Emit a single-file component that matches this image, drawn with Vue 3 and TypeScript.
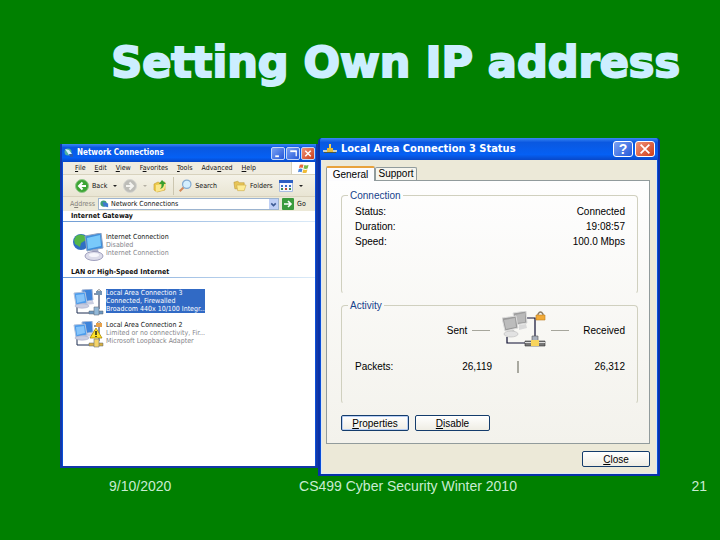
<script setup lang="ts">
import { ref } from 'vue'

interface MenuEntry { key: string; before: string; rest: string }
interface Connection { id: number; name: string; status: string; device: string; selected: boolean; warning: boolean }

const menus: MenuEntry[] = [
  { before: '', key: 'F', rest: 'ile' },
  { before: '', key: 'E', rest: 'dit' },
  { before: '', key: 'V', rest: 'iew' },
  { before: 'F', key: 'a', rest: 'vorites' },
  { before: '', key: 'T', rest: 'ools' },
  { before: 'Adva', key: 'n', rest: 'ced' },
  { before: '', key: 'H', rest: 'elp' },
]

const lan: Connection[] = [
  { id: 3, name: 'Local Area Connection 3', status: 'Connected, Firewalled', device: 'Broadcom 440x 10/100 Integr...', selected: true, warning: false },
  { id: 2, name: 'Local Area Connection 2', status: 'Limited or no connectivity, Fir...', device: 'Microsoft Loopback Adapter', selected: false, warning: true },
]

const details = [
  { label: 'Status:', value: 'Connected' },
  { label: 'Duration:', value: '19:08:57' },
  { label: 'Speed:', value: '100.0 Mbps' },
]

const address = ref('Network Connections')
</script>

<template>
  <main class="slide">
    <h1 class="headline">Setting Own IP address</h1>

    <div class="desktop">
      <section class="window explorer" aria-label="Network Connections">
        <header class="bar bar-small">
          <svg class="ico-title" viewBox="0 0 10 10">
            <circle cx="4" cy="4" r="3.5" fill="#4fb0a0" />
            <path d="M1 1l4 1 3 4 1 3-4-2z" fill="#d6f0ff" />
            <path d="M5 6l4 0 0 3-3 0z" fill="#2a5db0" />
          </svg>
          <span class="bar-text">Network Connections</span>
          <button class="cap blue" aria-label="Minimize"><svg viewBox="0 0 12 12"><path d="M3 9h4" stroke="#fff" stroke-width="2" /></svg></button>
          <button class="cap blue" aria-label="Maximize"><svg viewBox="0 0 12 12"><path d="M9.500 9V3" fill="none" stroke="#fff" stroke-width="1.400" /><path d="M3 3.500h7" stroke="#fff" stroke-width="2" /></svg></button>
          <button class="cap red" aria-label="Close"><svg viewBox="0 0 12 12"><path d="M3 3l6 6M9 3l-6 6" stroke="#fff" stroke-width="1.600" /></svg></button>
        </header>

        <div class="explorer-body">
          <nav class="menus">
            <button v-for="m in menus" :key="m.key" class="flat">{{ m.before }}<u>{{ m.key }}</u>{{ m.rest }}</button>
            <span class="flag">
              <svg viewBox="0 0 14 12">
                <path d="M3 2q2-1 4 0L6 5.500q-2-1-4 0z" fill="#e8683c" />
                <path d="M8 2.300q2 1 4.500 0L11.500 6q-2 1-4.500 0z" fill="#7cb84a" />
                <path d="M1.800 6.500q2-1 4 0L5 10q-2-1-4 0z" fill="#4a86dc" />
                <path d="M6.800 7q2 1 4.500 0L10.300 10.500q-2 1-4.500 0z" fill="#f0bc38" />
              </svg>
            </span>
          </nav>

          <div class="tools">
            <button class="flat tool">
              <svg class="ico" viewBox="0 0 14 14"><circle cx="7" cy="7" r="6.500" fill="#3da535" stroke="#93c98a" /><path d="M7.500 3.500L4 7l3.500 3.500M4 7h7" fill="none" stroke="#fff" stroke-width="2" /></svg>
              Back
            </button>
            <i class="caret"></i>
            <button class="flat tool" aria-label="Forward">
              <svg class="ico" viewBox="0 0 14 14"><circle cx="7" cy="7" r="6.500" fill="#bdbdb8" stroke="#d6d6d0" /><path d="M6.500 3.500L10 7l-3.500 3.500M10 7H3" fill="none" stroke="#f4f4f0" stroke-width="2" /></svg>
            </button>
            <i class="caret pale"></i>
            <button class="flat tool" aria-label="Up">
              <svg class="ico" viewBox="0 0 14 14"><path d="M1 5l4-2 2 1 5-1v8l-8 2-3-2z" fill="#ecc94c" stroke="#c69a2c" stroke-width=".6" /><path d="M3 6l10-1-2 6-8 2z" fill="#fbe78c" /><path d="M9 1l4 4H11q0 4-4 5 2-2 1.500-5H6z" fill="#38a030" /></svg>
            </button>
            <i class="rule"></i>
            <button class="flat tool search">
              <svg class="ico" viewBox="0 0 16 16"><path d="M7 9l-5 5" stroke="#d58a5c" stroke-width="2.400" /><circle cx="10" cy="6" r="4.800" fill="#d4efff" stroke="#86acd2" stroke-width="1.400" /></svg>
              Search
            </button>
            <button class="flat tool folders">
              <svg class="ico" viewBox="0 0 15 14"><path d="M1 3l4-1 2 1.500h5V10H2z" fill="#e8c558" stroke="#b99533" stroke-width=".6" /><path d="M4 6h10l-2 6H5z" fill="#fdec94" stroke="#c9a540" stroke-width=".6" /></svg>
              Folders
            </button>
            <button class="flat tool views" aria-label="Views">
              <svg class="ico" viewBox="0 0 14 12"><path d="M.5.5h13v11H.5z" fill="#f4f8ff" stroke="#a8bce0" /><path d="M0 0h14v3H0z" fill="#2b5fc4" /><path d="M2 5h2v2H2zM6 5h2v2H6zM10 5h2v2h-2z" fill="#3c70c8" /><path d="M2 8h2v2H2zM10 8h2v2h-2z" fill="#3a8a50" /><path d="M6 8h2v2H6z" fill="#c04a3a" /></svg>
            </button>
            <i class="caret"></i>
          </div>

          <form class="address" @submit.prevent>
            <label for="address">A<u>d</u>dress</label>
            <span class="field">
              <svg viewBox="0 0 10 10"><circle cx="4" cy="4" r="3.500" fill="#3f9f78" /><path d="M3 2l6 2v4l-5-1z" fill="#3e78d0" /></svg>
              <input id="address" v-model="address" type="text" />
              <button type="button" class="drop" aria-label="Show addresses"><svg viewBox="0 0 8 8"><path d="M2 3l2 2 2-2" fill="none" stroke="#3c5a94" stroke-width="1.400" /></svg></button>
            </span>
            <button class="flat go">
              <svg viewBox="0 0 12 12"><rect width="12" height="12" rx="1" fill="#3a9a3c" /><path d="M2 6h7M6 3l3 3-3 3" fill="none" stroke="#fff" stroke-width="1.600" /></svg>
              Go
            </button>
          </form>

          <div class="listing">
            <h2 class="group">Internet Gateway</h2>
            <article class="conn">
              <svg class="pic" viewBox="0 0 32 28">
                <circle cx="8" cy="9" r="8" fill="#2f6fc4" />
                <path d="M3 3q5-3 9 0l1 4-5 3-1 4-5-3-1-4z" fill="#55b648" />
                <path d="M12 3l16-3 2 15-16 3z" fill="#3f8fdc" stroke="#8fa2c0" />
                <path d="M14 5l13-3 1 11-13 3z" fill="#79c9fa" />
                <path d="M19 17l6-1 1 5h-6z" fill="#a8aec8" />
                <ellipse cx="21" cy="23" rx="9" ry="4.500" fill="#dcdcea" stroke="#8c8cae" stroke-width=".8" />
                <ellipse cx="21" cy="22" rx="5" ry="2" fill="#f6f6fc" />
              </svg>
              <div class="info"><span>Internet Connection</span><span>Disabled</span><span>Internet Connection</span></div>
            </article>

            <h2 class="group lan">LAN or High-Speed Internet</h2>
            <article v-for="c in lan" :key="c.id" class="conn" :class="{ selected: c.selected }">
              <svg class="pic" viewBox="0 0 32 28">
                <path d="M21 5h5v15M4 18v6h12" fill="none" stroke="#1c2c50" stroke-width="1" />
                <path d="M9 1l10-1 1 11-10 2z" fill="#3d83da" stroke="#a6b8d8" />
                <path d="M11 13l9-1 1 3-9 1z" fill="#c9cde0" />
                <path d="M1 4l11-1 2 11-11 2z" fill="#4c9cec" stroke="#b2c2dc" />
                <path d="M3 6l8-1 1 7-8 2z" fill="#86c4fa" />
                <ellipse cx="9" cy="17" rx="7" ry="2.200" fill="#c9cde0" stroke="#9a9fc0" stroke-width=".5" />
                <path d="M24 3V2q2-3 4 0v1" fill="none" stroke="#888" stroke-width="1" />
                <path d="M23 2h6v4h-6z" :fill="c.warning ? '#e8a24a' : '#7795b4'" />
                <path d="M16 22h14v3H16z" :fill="c.warning ? '#d8b040' : '#6d98c0'" stroke="#5a6470" stroke-width=".5" />
                <path d="M21 18h5v8h-5z" :fill="c.warning ? '#f5d468' : '#92b8d8'" stroke="#6a7480" stroke-width=".6" />
                <g v-if="c.warning"><path d="M23 7l6 10H17z" fill="#ffe22a" stroke="#a88600" stroke-width=".8" /><path d="M23 10v4M23 15v1" stroke="#111" stroke-width="1.400" /></g>
              </svg>
              <div class="info"><span>{{ c.name }}</span><span>{{ c.status }}</span><span>{{ c.device }}</span></div>
            </article>
          </div>
        </div>
      </section>

      <section class="window status" aria-label="Local Area Connection 3 Status">
        <header class="bar">
          <svg class="ico-net" viewBox="0 0 14 12"><path d="M0 7h14v2H0z" fill="#c9d0c8" /><path d="M6 1h2v5H6z" fill="#f2d257" /><path d="M4 5h6v5H4z" fill="#e8bd3a" /><path d="M1 9h12v1H1z" fill="#4a5a4a" /></svg>
          <span class="bar-text">Local Area Connection 3 Status</span>
          <button class="cap blue help" aria-label="Help">?</button>
          <button class="cap red" aria-label="Close"><svg viewBox="0 0 18 16"><path d="M4 3l10 10M14 3L4 13" stroke="#fff" stroke-width="2" /></svg></button>
        </header>

        <div class="status-body">
          <div class="tabs" role="tablist">
            <button class="tab active" role="tab" aria-selected="true">General</button>
            <button class="tab" role="tab" aria-selected="false">Support</button>
          </div>
          <div class="panel" role="tabpanel">
            <fieldset>
              <legend>Connection</legend>
              <dl class="details">
                <div v-for="d in details" :key="d.label"><dt>{{ d.label }}</dt><dd>{{ d.value }}</dd></div>
              </dl>
            </fieldset>

            <fieldset class="activity">
              <legend>Activity</legend>
              <div class="flow">
                <span class="sent">Sent</span>
                <i class="dash"></i>
                <svg class="pair" viewBox="0 0 44 38">
                  <path d="M24 7h9v19M5 26v6h18" fill="none" stroke="#0c0c30" stroke-width="1.200" />
                  <path d="M11 2l13-2 1 12-12 2z" fill="#9d9d9d" stroke="#dedede" />
                  <path d="M13 4l10-2v9l-9 1z" fill="#b9b9b9" />
                  <path d="M17 14l7-1 1 4-8 2z" fill="#dadada" />
                  <path d="M0 7l14-2 2 12-13 3z" fill="#9a9a9a" stroke="#dcdcdc" />
                  <path d="M2 9l11-2 1 9-10 2z" fill="#bcbcbc" />
                  <path d="M6 20l6-1 1 3H7z" fill="#c8c8c8" />
                  <ellipse cx="9" cy="23" rx="7" ry="3" fill="#e2e2e2" stroke="#b8b8b8" stroke-width=".6" />
                  <path d="M36 5V3q2.500-4 5 0v2" fill="none" stroke="#8a7a60" stroke-width="1.400" />
                  <path d="M34 4h9v5h-9z" fill="#f2ab38" stroke="#bc7c20" stroke-width=".6" />
                  <path d="M23 30h20v5H23z" fill="#777" stroke="#333" stroke-width=".6" />
                  <path d="M23 31h20v1H23z" fill="#ddd" />
                  <path d="M30 25h6v5h-6z" fill="#a8b0bc" stroke="#555" stroke-width=".6" />
                  <path d="M29 29h8v6h-8z" fill="#f8d45c" />
                </svg>
                <i class="dash"></i>
                <span class="received">Received</span>
              </div>
              <div class="packets">
                <span>Packets:</span><span class="num">26,119</span><i class="split"></i><span class="num">26,312</span>
              </div>
            </fieldset>

            <div class="actions">
              <button class="push default"><u>P</u>roperties</button>
              <button class="push wide"><u>D</u>isable</button>
            </div>
          </div>
          <div class="closing"><button class="push"><u>C</u>lose</button></div>
        </div>
      </section>
    </div>

    <footer class="foot"><span>9/10/2020</span><span>CS499 Cyber Security Winter 2010</span><span>21</span></footer>
  </main>
</template>

<style>
body { margin: 0; background: #008000; }
</style>

<style scoped>
* { box-sizing: border-box; }
button, input { font: inherit; color: inherit; margin: 0; }
svg { display: block; flex: none; }
i { flex: none; }

.slide {
  min-height: 100vh;
  background: #008000;
  font-family: "Liberation Sans", Arial, sans-serif;
}
.headline {
  margin: 0;
  padding: 32px 40px 0 0;
  height: 138px;
  text-align: right;
  font: bold 43px/60px "DejaVu Sans", sans-serif;
  color: #cceeff;
  -webkit-text-stroke: 2px #cceeff;
}
.desktop {
  display: grid;
  grid-template-columns: 258fr 342fr;
  align-items: start;
  padding: 0 60px;
}

/* window chrome */
.window { min-width: 0; background: #0a4fd8; }
.explorer { margin-top: 6px; border: 1px solid #1238a8; border-width: 0 2px 2px; }
.status { border: 2px solid #0831a8; border-top: 0; border-radius: 4px 4px 0 0; overflow: hidden; }
.bar {
  display: flex;
  align-items: center;
  gap: 2px;
  height: 22px;
  padding: 0 3px 0 3px;
  background: linear-gradient(#3a86f4, #0a58e0 20%, #0560f4 75%, #0848c8);
  color: #fff;
  font: bold 11px/20px "DejaVu Sans Condensed", "DejaVu Sans", sans-serif;
}
.bar-small { height: 18px; padding: 0 1px 0 2px; font-size: 8px; gap: 1px; }
.bar-text { flex: 1; padding-left: 2px; white-space: nowrap; }
.cap {
  display: grid;
  place-items: center;
  width: 20px;
  height: 16px;
  padding: 0;
  border: 1px solid #fff;
  border-radius: 3px;
}
.bar-small .cap { width: 14px; height: 13px; border-color: #c4d6f8; border-radius: 2px; }
.cap svg { width: 16px; height: 14px; }
.bar-small .cap svg { width: 12px; height: 11px; }
.blue { background: linear-gradient(135deg, #7ba2f4, #2458d8); }
.red { background: linear-gradient(135deg, #f0947a, #cc3c18); }
.help { font: bold 14px/14px "Liberation Sans", sans-serif; }
.ico-title { width: 10px; height: 10px; }
.ico-net { width: 14px; height: 12px; }

/* explorer window */
.explorer-body {
  display: flex;
  flex-direction: column;
  height: 304px;
  margin: 0 1px;
  background: #fff;
  font: 7px/8px "DejaVu Sans Condensed", "DejaVu Sans", sans-serif;
  color: #111;
}
.flat { padding: 0; border: 0; background: none; white-space: nowrap; }
.menus {
  display: flex;
  align-items: center;
  gap: 9px;
  height: 13px;
  padding-left: 12px;
  background: #efece0;
  border-bottom: 1px solid #d8d2bd;
}
.flag {
  display: grid;
  place-items: center;
  align-self: stretch;
  width: 24px;
  margin-left: auto;
  background: #fff;
  border-left: 1px solid #d8d2bd;
}
.flag svg { width: 13px; height: 11px; }
.tools {
  display: flex;
  align-items: center;
  gap: 6px;
  height: 22px;
  padding-left: 12px;
  background: linear-gradient(#f4f2e8, #e9e5d3);
  border-bottom: 1px solid #d8d2bd;
}
.tool { display: flex; align-items: center; gap: 3px; }
.ico { width: 14px; height: 14px; }
.caret { border: 2px solid transparent; border-top-color: #222; border-bottom: 0; }
.pale { border-top-color: #b4b0a4; }
.rule { width: 1px; height: 18px; background: #ccc6b0; }
.search { margin-left: -2px; }
.folders { margin-left: 10px; }
.address {
  display: flex;
  align-items: center;
  height: 14px;
  padding: 0 2px 0 7px;
  gap: 3px;
  background: #ece9d8;
}
.address label { color: #85827a; }
.field {
  display: flex;
  align-items: center;
  flex: 1;
  min-width: 0;
  height: 12px;
  padding-left: 1px;
  gap: 2px;
  background: #fff;
  border: 1px solid #9cb4d0;
}
.field svg { width: 9px; height: 9px; }
.field input { flex: 1; min-width: 0; height: 10px; padding: 0; border: 0; background: none; outline: 0; }
.drop { width: 9px; height: 10px; padding: 0; border: 0; background: #bfd0f6; }
.go { display: flex; align-items: center; gap: 3px; width: 31px; }
.go svg { width: 12px; height: 12px; }

.group {
  margin: 0;
  padding: 0 0 0 8px;
  font: bold 7px/10px "DejaVu Sans Condensed", "DejaVu Sans", sans-serif;
  border-bottom: 1px solid;
  border-image: linear-gradient(90deg, #6f9cd4, #dcebf8) 1;
}
.lan { margin-top: 6px; }
.conn { display: flex; gap: 1px; margin: 11px 0 0 10px; }
.conn + .conn { margin-top: 4px; }
.pic { width: 32px; height: 28px; }
.conn .info { display: flex; flex-direction: column; height: 24px; width: 99px; white-space: nowrap; color: #85858a; }
.conn .info span:first-child { color: #111; }
.conn.selected .info, .conn.selected .info span { background: #316ac5; color: #fff; }

/* status window */
.status-body {
  margin: 0 1px;
  padding: 6px 6px 6px 4px;
  background: #ece9d8;
  border: 1px solid #dfe8f4;
  border-top: 0;
  font-size: 10px;
  line-height: 15px;
  color: #000;
}
.tabs { display: flex; align-items: flex-end; height: 14px; }
.tab {
  width: 42px;
  height: 13px;
  padding: 0;
  line-height: 12px;
  border: 1px solid #919b9c;
  border-bottom: 0;
  border-radius: 2px 2px 0 0;
  background: #f6f5ee;
}
.tab.active { position: relative; width: 49px; height: 15px; margin-bottom: -1px; border-top: 2px solid #e8a23c; background: #fcfcfe; }
.panel {
  padding: 8px 11px 12px 14px;
  border: 1px solid #919b9c;
  background: linear-gradient(#fefefe, #f3f2ec);
}
fieldset {
  min-width: 0;
  height: 105px;
  margin: 0;
  padding: 0 12px 0 13px;
  border: 1px solid #d0d0bf;
  border-bottom-color: transparent;
  border-radius: 4px;
}
legend { margin-left: -7px; padding: 0 2px; line-height: 13px; color: #15428b; }
.details { margin: 0; padding-top: 2px; }
.details div { display: flex; justify-content: space-between; }
dt, dd { margin: 0; }
.activity { margin-top: 5px; }
.flow { display: flex; align-items: center; justify-content: flex-end; gap: 5px; height: 36px; }
.dash { width: 18px; height: 1px; background: #a6a69c; }
.pair { width: 44px; height: 38px; margin-left: 7px; }
.received { padding-left: 9px; }
.packets { display: grid; grid-template-columns: 80px 1fr 51px 82px; align-items: center; padding-top: 11px; }
.num { text-align: right; }
.split { justify-self: center; width: 2px; height: 12px; background: #a9a9a0; }
.actions { display: flex; gap: 6px; margin-top: 11px; }
.push {
  width: 68px;
  height: 16px;
  padding: 0;
  line-height: 13px;
  border: 1px solid #143c6c;
  border-radius: 2px;
  background: linear-gradient(#fff, #efede4);
}
.wide { width: 75px; }
.default { box-shadow: inset 0 0 0 1px #b6cdf4; }
.closing { display: flex; justify-content: flex-end; margin-top: 7px; }

.foot {
  display: grid;
  grid-template-columns: 1fr auto 1fr;
  padding: 2px 13px 0 109px;
  font-size: 14px;
  line-height: 16px;
  color: #c8ecd2;
}
.foot span:last-child { text-align: right; }
</style>
